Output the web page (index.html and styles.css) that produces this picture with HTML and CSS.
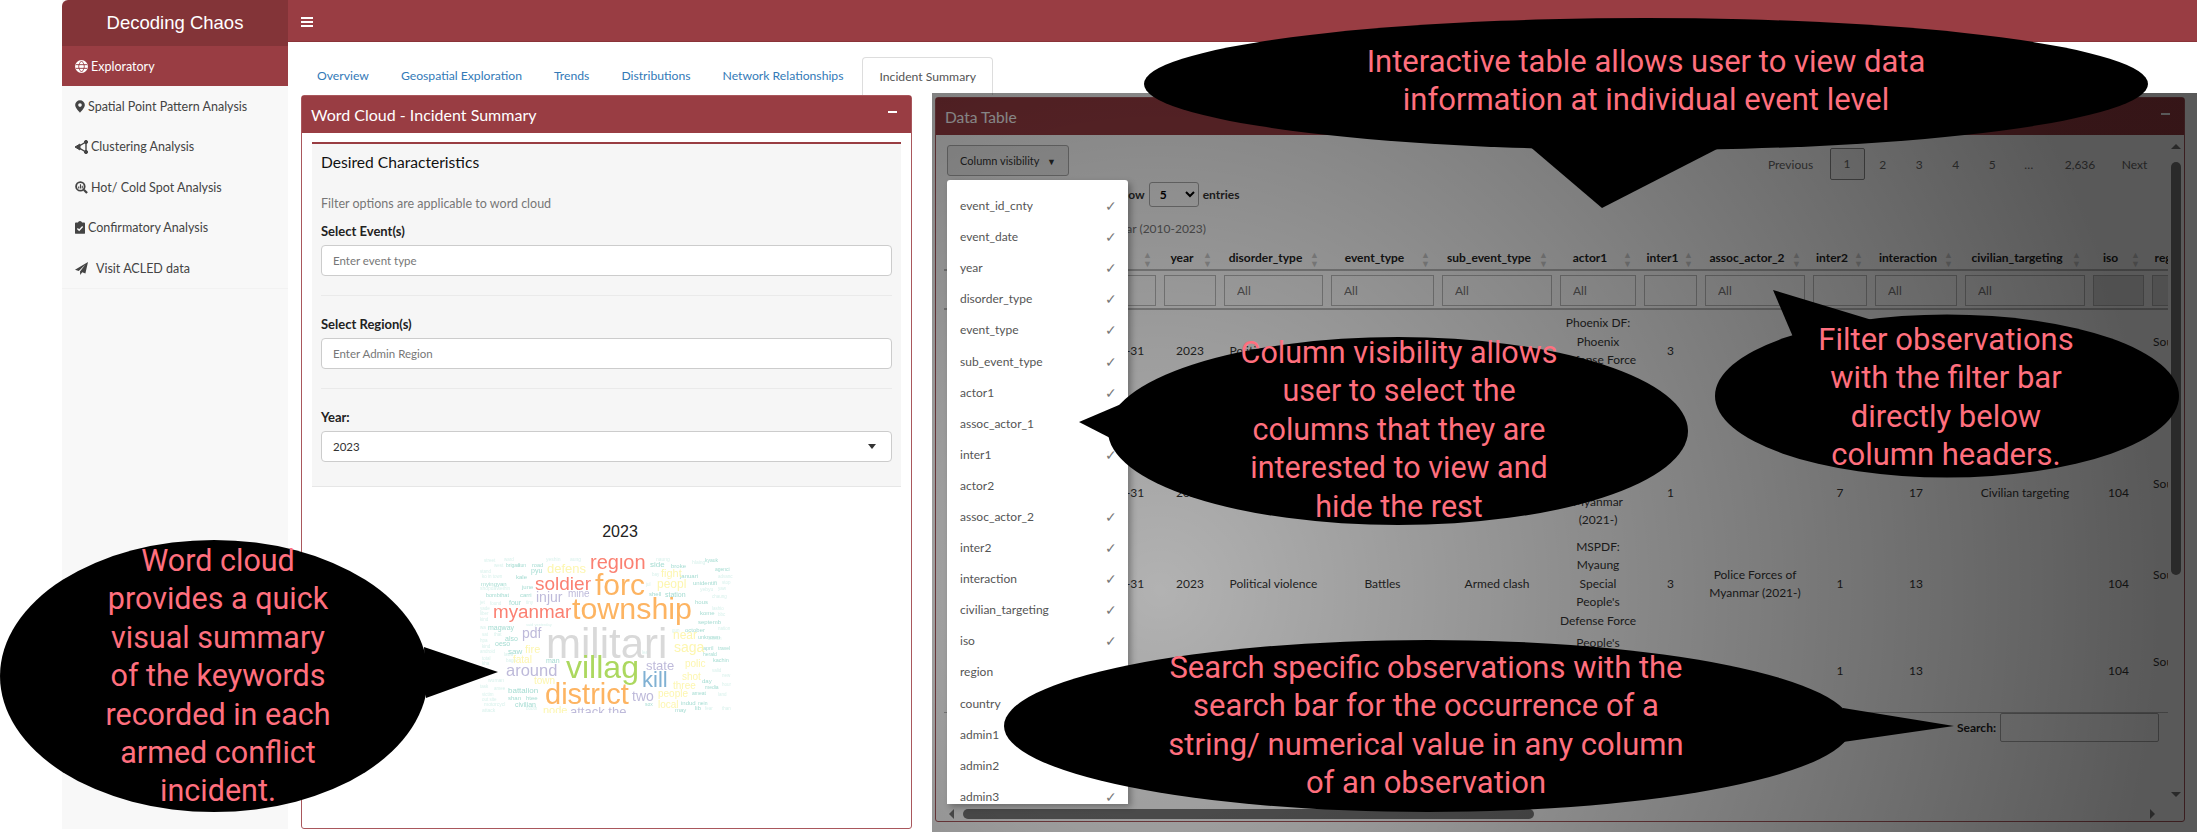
FILE: index.html
```html
<!DOCTYPE html>
<html lang="en">
<head>
  <meta charset="UTF-8">
  <title>Decoding Chaos</title>
  <link rel="stylesheet" href="styles.css">
</head>
<body>

  <div class="page">

    <!-- Sidebar -->
    <div class="sidebar">
      <div class="brand">Decoding Chaos</div>
      <div class="nav-item active">
        <svg class="icon" width="13" height="13" viewBox="0 0 14 14" fill="none" stroke="#fff" stroke-width="1.4"><circle cx="7" cy="7" r="6.2" fill="#fff"/><path d="M1 5h12M1 9h12M7 1c-4 4-4 8 0 12M7 1c4 4 4 8 0 12" stroke="#993d43" stroke-width="1"/></svg>
        <span>Exploratory</span>
      </div>
      <div class="nav-item">
        <svg class="icon" width="10" height="13" viewBox="0 0 12 15"><path fill="#444" fill-rule="evenodd" d="M6 0a5.8 5.8 0 0 0-5.8 5.8C.2 9.2 6 15 6 15s5.8-5.8 5.8-9.2A5.8 5.8 0 0 0 6 0zm0 3.6a2.2 2.2 0 1 1 0 4.4 2.2 2.2 0 0 1 0-4.4z"/></svg>
        <span>Spatial Point Pattern Analysis</span>
      </div>
      <div class="nav-item">
        <svg class="icon" width="13" height="14" viewBox="0 0 13 14" fill="#444" stroke="#444"><path d="M2.5 7L11 2v10z" fill="none" stroke-width="1.4"/><path d="M0 7l5-3v6z"/><circle cx="11" cy="2" r="1.6"/><circle cx="11" cy="12" r="1.6"/></svg>
        <span>Clustering Analysis</span>
      </div>
      <div class="nav-item">
        <svg class="icon" width="13" height="13" viewBox="0 0 14 14" fill="none" stroke="#444"><circle cx="5.8" cy="5.8" r="4.6" stroke-width="2"/><path d="M9.5 9.5L13 13" stroke-width="2.4"/><path d="M4 8V6M5.9 8V3.6M7.8 8V5" stroke-width="1.2"/></svg>
        <span>Hot/ Cold Spot Analysis</span>
      </div>
      <div class="nav-item">
        <svg class="icon" width="10" height="13" viewBox="0 0 11 14"><path fill="#444" d="M1 1.6h2.2a2.4 2.4 0 0 1 4.6 0H10a1 1 0 0 1 1 1V13a1 1 0 0 1-1 1H1a1 1 0 0 1-1-1V2.6a1 1 0 0 1 1-1z"/><path fill="none" stroke="#f8f8f8" stroke-width="1.5" d="M2.6 8l2 2 3.8-4"/></svg>
        <span>Confirmatory Analysis</span>
      </div>
      <div class="nav-item nav-last">
        <svg class="icon" width="13" height="13" viewBox="0 0 14 14"><path fill="#444" d="M14 0L0 8.4l4 1.3L11 3 5.4 10.2 5.6 14l2.2-3 3.4 1.4z"/></svg>
        <span>Visit ACLED data</span>
      </div>
    </div>

    <div class="main">
      <!-- Barra de cima -->
      <div class="topbar"><span class="burger"></span></div>

      <div class="tabs">
        <a class="tab">Overview</a>
        <a class="tab">Geospatial Exploration</a>
        <a class="tab">Trends</a>
        <a class="tab">Distributions</a>
        <a class="tab">Network Relationships</a>
        <a class="tab tab-active">Incident Summary</a>
      </div>

      <div class="panels">

        <!-- Word cloud -->
        <div class="box box-cloud">
          <div class="box-header">
            <span class="cloud-title">Word Cloud - Incident Summary</span>
            <span class="collapse"></span>
          </div>
          <div class="well">
            <h4>Desired Characteristics</h4>
            <p class="help">Filter options are applicable to word cloud</p>
            <label>Select Event(s)</label>
            <input class="field" type="text" placeholder="Enter event type">
            <hr>
            <label>Select Region(s)</label>
            <input class="field" type="text" placeholder="Enter Admin Region">
            <hr>
            <label>Year:</label>
            <div class="field field-select">2023<span class="caret"></span></div>
          </div>

          <div class="plot-title">2023</div>
          <svg class="cloud" width="258" height="156" viewBox="18 17 258 156">
            <g class="w-tiny">
              <text x="24" y="22" font-size="4.5">street</text><text x="34" y="27" font-size="4.5">west</text><text x="20" y="33" font-size="4.5">stand</text><text x="22" y="38" font-size="4.5">ko in town</text><text x="44" y="21" font-size="4.5">ward</text><text x="86" y="21" font-size="5">yeshin</text><text x="110" y="21" font-size="5">aung</text><text x="196" y="21" font-size="5">naung</text><text x="232" y="24" font-size="5">hlaing</text><text x="258" y="38" font-size="4.5">advanc</text><text x="262" y="44" font-size="4.5">stop</text><text x="258" y="50" font-size="4.5">yaw</text><text x="240" y="51" font-size="5">yebyu</text><text x="20" y="50" font-size="5">shopdawei</text><text x="44" y="50" font-size="4.5">hin</text><text x="20" y="64" font-size="4.5">jet</text><text x="30" y="65" font-size="4.5">found</text><text x="66" y="64" font-size="4.5">tiny</text><text x="20" y="70" font-size="4.5">yade</text><text x="20" y="75" font-size="4.5">liber</text><text x="20" y="81" font-size="4.5">kind</text><text x="20" y="89" font-size="4.5">wa</text><text x="66" y="86" font-size="4">said yesterday</text><text x="252" y="58" font-size="4.5">chaung</text><text x="252" y="70" font-size="4.5">lashio</text><text x="258" y="76" font-size="4.5">bbc</text><text x="258" y="90" font-size="4.5">nation</text><text x="248" y="100" font-size="4.5">ditmon</text><text x="22" y="96" font-size="4.5">sat</text><text x="34" y="96" font-size="4.5">that</text><text x="20" y="102" font-size="4.5">hpa</text><text x="22" y="108" font-size="4.5">kind</text><text x="20" y="113" font-size="4.5">android</text><text x="44" y="116" font-size="4.5">lawa</text><text x="22" y="120" font-size="4.5">total</text><text x="22" y="125" font-size="4.5">kha</text><text x="46" y="122" font-size="4.5">bago</text><text x="20" y="132" font-size="4.5">mil</text><text x="28" y="142" font-size="5">wuman</text><text x="20" y="148" font-size="4.5">task</text><text x="34" y="150" font-size="4.5">amee</text><text x="22" y="156" font-size="4.5">victim</text><text x="22" y="161" font-size="4.5">out site</text><text x="24" y="166" font-size="5">motorcycl</text><text x="22" y="172" font-size="5">attack</text><text x="66" y="170" font-size="4.5">booth</text><text x="252" y="132" font-size="4.5">valid</text><text x="262" y="137" font-size="4.5">new</text><text x="262" y="146" font-size="4.5">hour</text><text x="258" y="156" font-size="4.5">land</text><text x="262" y="170" font-size="4.5">than</text><text x="245" y="170" font-size="4.5">fear</text><text x="182" y="114" font-size="4.5">leat</text><text x="212" y="92" font-size="4.5">gun</text><text x="186" y="46" font-size="4.5">jul</text><text x="192" y="36" font-size="4.5">bay</text>
            </g>
            <g class="w-teal">
              <text x="190" y="27" font-size="8">side</text><text x="205" y="57" font-size="7">station</text><text x="189" y="56" font-size="6">shell</text><text x="48" y="153" font-size="8">battalion</text><text x="55" y="167" font-size="7">civilian</text><text x="48" y="114" font-size="8">saw</text><text x="45" y="101" font-size="7">also</text><text x="35" y="106" font-size="7">oeso</text><text x="28" y="90" font-size="7">magway</text><text x="62" y="49" font-size="6">june</text><text x="49" y="65" font-size="7">four</text><text x="21" y="46" font-size="6">myingyan</text><text x="71" y="33" font-size="7">pyu</text><text x="56" y="39" font-size="6">kale</text><text x="26" y="57" font-size="5.5">bombthat</text><text x="60" y="57" font-size="6">carri</text><text x="48" y="160" font-size="6">shan</text><text x="66" y="160" font-size="6">htee</text><text x="86" y="123" font-size="7">man</text><text x="225" y="92" font-size="6">october</text><text x="238" y="99" font-size="5.5">unknown</text><text x="253" y="122" font-size="5.5">kachin</text><text x="235" y="64" font-size="6">hous</text><text x="233" y="45" font-size="6">unidentifi</text><text x="220" y="38" font-size="6">januari</text><text x="240" y="75" font-size="6">kome</text><text x="238" y="84" font-size="6">septemb</text><text x="243" y="110" font-size="5.5">april</text><text x="258" y="110" font-size="5">travel</text><text x="243" y="116" font-size="5">herald</text><text x="242" y="143" font-size="6">day</text><text x="245" y="149" font-size="5">media</text><text x="232" y="155" font-size="5">ameat</text><text x="221" y="165" font-size="6">indud</text><text x="215" y="172" font-size="6">may</text><text x="235" y="170" font-size="6">lib</text><text x="185" y="166" font-size="5">sox</text><text x="211" y="28" font-size="6">broke</text><text x="255" y="31" font-size="5">agenci</text><text x="245" y="22" font-size="5">kyauk</text><text x="72" y="27" font-size="5.5">road</text><text x="46" y="27" font-size="5">brigad</text><text x="58" y="27" font-size="5">kun</text><text x="238" y="165" font-size="5">nein</text>
            </g>
            <g class="w-yellow">
              <text x="87" y="33" font-size="13">defens</text><text x="197" y="48" font-size="12">peopl</text><text x="201" y="37" font-size="11">fight</text><text x="213" y="99" font-size="12">near</text><text x="214" y="112" font-size="14">saga</text><text x="65" y="113" font-size="11">fire</text><text x="53" y="123" font-size="10">fatal</text><text x="74" y="144" font-size="10">town</text><text x="222" y="140" font-size="10">shot</text><text x="213" y="149" font-size="10">three</text><text x="198" y="157" font-size="10">people</text><text x="225" y="127" font-size="10">polic</text><text x="198" y="168" font-size="10">local</text><text x="83" y="174" font-size="11">node</text>
            </g>
            <g class="w-lav">
              <text x="46" y="136" font-size="16.5">around</text><text x="186" y="130" font-size="13">state</text><text x="172" y="161" font-size="14">two</text><text x="62" y="98" font-size="14">pdf</text><text x="76" y="62" font-size="14">injur</text><text x="108" y="57" font-size="10">mine</text><text x="110" y="176" font-size="13">attack the</text>
            </g>
            <text class="w-grey" x="86" y="118" font-size="42">militari</text>
            <text class="w-orange" x="112" y="79" font-size="30.4">township</text>
            <text class="w-orange" x="135" y="55" font-size="30">forc</text>
            <text class="w-orange" x="85" y="164" font-size="29">district</text>
            <text class="w-red" x="33" y="78" font-size="18.8">myanmar</text>
            <text class="w-red" x="75" y="50" font-size="19">soldier</text>
            <text class="w-red" x="130" y="29" font-size="20">region</text>
            <text class="w-green" x="106" y="138" font-size="32">villag</text>
            <text class="w-blue" x="182" y="147" font-size="22">kill</text>
          </svg>
        </div>

        <!-- Tabela de dados -->
        <div class="box box-data">
          <div class="box-header">
            <span>Data Table</span>
            <span class="collapse"></span>
          </div>
          <div class="dt-body">
            <div class="dt-top">
              <button class="btn-colvis">Column visibility <span class="btn-caret">▼</span></button>
              <div class="pager">
                <span class="page-link page-prev">Previous</span>
                <span class="page-link page-current">1</span>
                <span class="page-link">2</span>
                <span class="page-link">3</span>
                <span class="page-link">4</span>
                <span class="page-link">5</span>
                <span class="page-link">…</span>
                <span class="page-link page-last">2,636</span>
                <span class="page-link page-next">Next</span>
              </div>
            </div>
            <div class="dt-length">Show <select><option>5</option></select> entries</div>
            <div class="dt-caption">Incidents by year (2010-2023)</div>

            <div class="dt-scroll">
              <table class="dt-table">
                <colgroup>
                  <col class="c-id"><col class="c-date"><col class="c-year"><col class="c-disorder"><col class="c-event"><col class="c-sub"><col class="c-actor"><col class="c-inter1"><col class="c-assoc"><col class="c-inter2"><col class="c-interaction"><col class="c-civ"><col class="c-iso"><col class="c-region">
                </colgroup>
                <thead>
                  <tr class="head-row">
                    <th>event_id_cnty</th><th>event_date</th><th>year</th><th>disorder_type</th><th>event_type</th><th>sub_event_type</th><th>actor1</th><th>inter1</th><th>assoc_actor_2</th><th>inter2</th><th>interaction</th><th>civilian_targeting</th><th>iso</th><th>region</th>
                  </tr>
                  <tr class="filter-row">
                    <td><input placeholder="All"></td><td><input></td><td><input></td><td><input placeholder="All"></td><td><input placeholder="All"></td><td><input placeholder="All"></td><td><input placeholder="All"></td><td><input></td><td><input placeholder="All"></td><td><input></td><td><input placeholder="All"></td><td><input placeholder="All"></td><td><input class="input-off"></td><td><input class="input-off"></td>
                  </tr>
                </thead>
                <tbody>
                  <tr class="row-1">
                    <td>MMR50001</td><td>2023-12-31</td><td>2023</td><td>Political violence</td><td>Battles</td><td>Armed clash</td><td>Phoenix DF:<br>Phoenix<br>Defense Force<br>Myanmar</td><td>3</td><td></td><td>1</td><td>13</td><td></td><td>104</td><td>Southeast<br>Asia</td>
                  </tr>
                  <tr class="row-2">
                    <td>MMR50002</td><td>2023-12-31</td><td>2023</td><td>Political violence</td><td>Violence against<br>civilians</td><td>Attack</td><td>Military<br>Forces of<br>Myanmar<br>(2021-)</td><td>1</td><td></td><td>7</td><td>17</td><td>Civilian targeting</td><td>104</td><td>Southeast<br>Asia</td>
                  </tr>
                  <tr class="row-3">
                    <td>MMR50003</td><td>2023-12-31</td><td>2023</td><td>Political violence</td><td>Battles</td><td>Armed clash</td><td>MSPDF:<br>Myaung<br>Special<br>People's<br>Defense Force</td><td>3</td><td>Police Forces of<br>Myanmar (2021-)</td><td>1</td><td>13</td><td></td><td>104</td><td>Southeast<br>Asia</td>
                  </tr>
                  <tr class="row-4">
                    <td>MMR50004</td><td>2023-12-31</td><td>2023</td><td>Political violence</td><td>Battles</td><td>Armed clash</td><td>People's<br>Defense<br>Force<br>Myanmar</td><td>3</td><td></td><td>1</td><td>13</td><td></td><td>104</td><td>Southeast<br>Asia</td>
                  </tr>
                </tbody>
              </table>
            </div>

            <div class="dt-search">
              <label>Search:</label>
              <input type="text">
            </div>

            <!-- Barras de rolagem -->
            <div class="scroll-v">
              <span class="arrow arrow-up"></span>
              <span class="thumb-v"></span>
              <span class="arrow arrow-down"></span>
            </div>
            <div class="scroll-h">
              <span class="arrow arrow-left"></span>
              <span class="thumb-h"></span>
              <span class="arrow arrow-right"></span>
            </div>
          </div>
        </div>

      </div>
    </div>
  </div>

  <!-- Fundo escuro do menu de colunas -->
  <div class="dt-backdrop"></div>

  <div class="colvis-menu">
    <div class="colvis-item"><span>event_id_cnty</span><span class="tick">✓</span></div>
    <div class="colvis-item"><span>event_date</span><span class="tick">✓</span></div>
    <div class="colvis-item"><span>year</span><span class="tick">✓</span></div>
    <div class="colvis-item"><span>disorder_type</span><span class="tick">✓</span></div>
    <div class="colvis-item"><span>event_type</span><span class="tick">✓</span></div>
    <div class="colvis-item"><span>sub_event_type</span><span class="tick">✓</span></div>
    <div class="colvis-item"><span>actor1</span><span class="tick">✓</span></div>
    <div class="colvis-item"><span>assoc_actor_1</span></div>
    <div class="colvis-item"><span>inter1</span><span class="tick">✓</span></div>
    <div class="colvis-item"><span>actor2</span></div>
    <div class="colvis-item"><span>assoc_actor_2</span><span class="tick">✓</span></div>
    <div class="colvis-item"><span>inter2</span><span class="tick">✓</span></div>
    <div class="colvis-item"><span>interaction</span><span class="tick">✓</span></div>
    <div class="colvis-item"><span>civilian_targeting</span><span class="tick">✓</span></div>
    <div class="colvis-item"><span>iso</span><span class="tick">✓</span></div>
    <div class="colvis-item"><span>region</span></div>
    <div class="colvis-item"><span>country</span></div>
    <div class="colvis-item"><span>admin1</span></div>
    <div class="colvis-item"><span>admin2</span></div>
    <div class="colvis-item"><span>admin3</span><span class="tick">✓</span></div>
  </div>

  <!-- Balões de anotação -->
  <svg class="callouts" width="2197" height="832" viewBox="0 0 2197 832">
    <ellipse cx="1646" cy="84" rx="502" ry="66"/>
    <path d="M1528 145L1602 208L1721 147z"/>
    <ellipse cx="1398" cy="431" rx="290" ry="94"/>
    <path d="M1126 402L1079 422L1118 442z"/>
    <ellipse cx="1947" cy="396" rx="232" ry="81.5"/>
    <path d="M1793 337L1773 290L1872 320z"/>
    <ellipse cx="1428" cy="726" rx="424" ry="86"/>
    <path d="M1843 708L1954 726L1843 742z"/>
    <ellipse cx="214" cy="676" rx="214" ry="136"/>
    <path d="M424 647L498 672L426 698z"/>
  </svg>

  <div class="note note-table">Interactive table allows user to view data<br>information at individual event level</div>
  <div class="note note-colvis">Column visibility allows<br>user to select the<br>columns that they are<br>interested to view and<br>hide the rest</div>
  <div class="note note-filter">Filter observations<br>with the filter bar<br>directly below<br>column headers.</div>
  <div class="note note-search">Search specific observations with the<br>search bar for the occurrence of a<br>string/ numerical value in any column<br>of an observation</div>
  <div class="note note-cloud">Word cloud<br>provides a quick<br>visual summary<br>of the keywords<br>recorded in each<br>armed conflict<br>incident.</div>

</body>
</html>
```

FILE: styles.css
```css
html, body {
  margin: 0;
  padding: 0;
}

body {
  width: 2197px;
  height: 832px;
  overflow: hidden;
  position: relative;
  background-color: #fff;
  font-family: "Lato", "Open Sans", sans-serif;
  font-size: 12px;
  color: #333;
}

.page {
  display: flex;
  height: 829px;
  padding-left: 62px;
}

/* Sidebar */
.sidebar {
  width: 226px;
  flex-shrink: 0;
  background-color: #f8f8f8;
}

.brand {
  height: 46px;
  line-height: 46px;
  text-align: center;
  background-color: #833438;
  border-top-left-radius: 6px;
  color: #fff;
  font-family: "Liberation Sans", sans-serif;
  font-size: 18.5px;
}

.nav-item {
  display: flex;
  align-items: center;
  gap: 3px;
  height: 40.4px;
  padding-left: 13px;
  font-size: 12.5px;
  color: #444;
}

.nav-item.active {
  background-color: #993d43;
  color: #fff;
}

.nav-last {
  border-bottom: 1px solid #f2f2f2;
}

.nav-last .icon {
  margin-right: 5px;
}

/* Topo */
.main {
  flex: 1;
  min-width: 0;
}

.topbar {
  height: 41px;
  background-color: #993d43;
  border-bottom: 1px solid #8a3439;
  display: flex;
  align-items: center;
  padding-left: 13px;
}

.burger {
  width: 12px;
  height: 2px;
  margin-bottom: 6px;
  background-color: #fff;
  box-shadow: 0 4px 0 #fff, 0 8px 0 #fff;
}

/* Abas */
.tabs {
  display: flex;
  height: 38px;
  margin-top: 15px;
  padding-left: 13px;
}

.tab {
  padding: 0 16px;
  line-height: 38px;
  font-size: 12.2px;
  color: #337ab7;
}

.tab-active {
  margin-left: 3px;
  color: #555;
  background-color: #fff;
  border: 1px solid #ddd;
  border-bottom: none;
  border-radius: 4px 4px 0 0;
  line-height: 37px;
}

/* Caixas */
.panels {
  display: flex;
  gap: 23px;
  padding-left: 13px;
}

.box {
  box-sizing: border-box;
  border: 1px solid #a9575c;
  border-radius: 3px;
  background-color: #fff;
}

.box-cloud {
  width: 611px;
  height: 734px;
}

.box-data {
  width: 1250px;
  height: 725px;
  margin-top: 2px;
  position: relative;
}

.box-header {
  height: 37px;
  padding: 0 9px;
  display: flex;
  align-items: center;
  justify-content: space-between;
  background-color: #993d43;
  color: #fff;
  font-size: 15.5px;
}

.cloud-title {
  font-size: 16px;
}

.collapse {
  width: 9px;
  height: 2px;
  margin: 0 5px 6px 0;
  background-color: #fff;
}

/* Filtros */
.well {
  box-sizing: border-box;
  height: 345px;
  margin: 9px 10px 0;
  padding: 8px 9px 0;
  background-color: #f6f6f6;
  border-top: 2px solid #993d43;
  border-bottom: 1px solid #e6e6e6;
}

.well h4 {
  margin: 0;
  font-size: 15.6px;
  font-weight: 400;
  line-height: 20px;
  color: #111;
}

.help {
  margin: 24px 0 0;
  line-height: 16px;
  font-size: 12.5px;
  color: #777;
}

.well label {
  display: block;
  margin-top: 11px;
  line-height: 16px;
  font-size: 13px;
  font-weight: 700;
  color: #222;
}

.field {
  display: block;
  box-sizing: border-box;
  width: 100%;
  height: 31px;
  margin-top: 6px;
  padding: 0 11px;
  background-color: #fff;
  border: 1px solid #ccc;
  border-radius: 4px;
  font-family: inherit;
  font-size: 11.5px;
  color: #333;
}

.field::placeholder {
  color: #777;
}

.well hr {
  height: 1px;
  margin: 19px 0 0;
  border: none;
  background-color: #eaeaea;
}

.well hr + label {
  margin-top: 20px;
}

.field-select {
  display: flex;
  align-items: center;
  justify-content: space-between;
  padding-right: 15px;
}

.caret {
  border-left: 4px solid transparent;
  border-right: 4px solid transparent;
  border-top: 5px solid #333;
}

/* Nuvem de palavras */
.plot-title {
  margin: 36px 0 0 27px;
  text-align: center;
  font-family: "Liberation Sans", sans-serif;
  font-size: 16px;
  line-height: 18px;
  color: #222;
}

.cloud {
  display: block;
  margin: 16px 0 0 176px;
  font-family: "Liberation Sans", sans-serif;
  filter: blur(0.3px);
}

.w-tiny { fill: #d8f1ec; }
.w-teal { fill: #a5dcd2; }
.w-yellow { fill: #fdf6b0; }
.w-lav { fill: #bebada; }
.w-grey { fill: #d9d9d9; }
.w-orange { fill: #fdb462; }
.w-red { fill: #fb8072; }
.w-green { fill: #acd85f; }
.w-blue { fill: #80b1d3; }

/* Tabela */
.dt-body {
  position: relative;
  height: 687px;
  padding: 10px 0 0 8px;
  box-sizing: border-box;
}

.dt-top {
  display: flex;
  justify-content: space-between;
  height: 35px;
  padding-right: 28px;
}

.btn-colvis {
  width: 122px;
  height: 31px;
  margin-left: 3px;
  padding: 0;
  background-color: #eee;
  border: 1px solid #aaa;
  border-radius: 3px;
  font-family: inherit;
  font-size: 11px;
  color: #333;
}

.btn-caret {
  margin-left: 5px;
  font-size: 9px;
}

.pager {
  display: flex;
  align-items: center;
  height: 32px;
  margin-top: 3px;
  font-size: 12px;
  color: #666;
}

.page-link {
  width: 36.5px;
  text-align: center;
}

.page-prev {
  width: 62px;
  padding-right: 8px;
}

.page-current {
  box-sizing: border-box;
  width: 35px;
  height: 32px;
  line-height: 30px;
  background-color: #f4f4f4;
  border: 1px solid #888;
  border-radius: 2px;
}

.page-last {
  width: 66px;
}

.page-next {
  width: 43px;
}

.dt-length {
  height: 25px;
  margin-top: 2px;
  padding-left: 171px;
  display: flex;
  align-items: center;
  gap: 4px;
  font-size: 12px;
  font-weight: 700;
  color: #333;
}

.dt-length select {
  width: 50px;
  height: 25px;
  border: 1px solid #aaa;
  border-radius: 3px;
  background-color: #fff;
  font-family: inherit;
  font-size: 12px;
  font-weight: 700;
  padding-left: 6px;
}

.dt-caption {
  width: 262px;
  margin-top: 14px;
  text-align: right;
  line-height: 16px;
  font-size: 12px;
  color: #777;
}

.dt-scroll {
  width: 1224px;
  margin-top: 10px;
  overflow: hidden;
}

.dt-table {
  width: 1267px;
  table-layout: fixed;
  border-collapse: separate;
  border-spacing: 0;
  text-align: center;
  font-size: 12px;
  line-height: 18.4px;
}

.c-id { width: 100px; }
.c-date { width: 116px; }
.c-year { width: 60px; }
.c-disorder { width: 107px; }
.c-event { width: 111px; }
.c-sub { width: 118px; }
.c-actor { width: 84px; }
.c-inter1 { width: 61px; }
.c-assoc { width: 108px; }
.c-inter2 { width: 62px; }
.c-interaction { width: 90px; }
.c-civ { width: 128px; }
.c-iso { width: 59px; }
.c-region { width: 63px; }

.dt-table th {
  position: relative;
  height: 22px;
  padding: 0 20px 0 4px;
  border-bottom: 2px solid #bbb;
  font-weight: 700;
  white-space: nowrap;
  color: #222;
}

/* setinhas de ordenação */
.dt-table th::before,
.dt-table th::after {
  position: absolute;
  right: 8px;
  font-size: 9px;
  line-height: 9px;
  color: #ccc;
}

.dt-table th::before {
  content: "▲";
  top: 3px;
}

.dt-table th::after {
  content: "▼";
  top: 12px;
}

.filter-row td {
  height: 37px;
  padding: 0 4px;
  border-bottom: 2px solid #bbb;
}

.filter-row input {
  display: block;
  box-sizing: border-box;
  width: 100%;
  height: 31px;
  margin-top: 2px;
  padding: 0 12px;
  background-color: #fff;
  border: 1px solid #bbb;
  font-family: inherit;
  font-size: 12px;
}

.filter-row input.input-off {
  background-color: #e4e4e4;
}

.dt-table tbody td {
  box-sizing: border-box;
  padding: 0 4px;
  vertical-align: middle;
  white-space: nowrap;
  color: #333;
}

.dt-table tbody td:nth-child(2) {
  padding-left: 24px;
}

.dt-table tbody .row-1 td {
  height: 138px;
  padding-bottom: 56px;
}

.row-2 td {
  height: 90px;
}

.row-3 td {
  height: 92px;
}

.row-4 td {
  height: 83px;
  border-bottom: 1px solid #bbb;
}

.dt-search {
  display: flex;
  justify-content: flex-end;
  align-items: center;
  gap: 4px;
  width: 1215px;
  font-size: 12px;
  font-weight: 700;
  color: #222;
}

.dt-search input {
  box-sizing: border-box;
  width: 159px;
  height: 29px;
  background-color: #fff;
  border: 1px solid #aaa;
  border-radius: 2px;
}

/* Barras de rolagem */
.scroll-v {
  position: absolute;
  top: 0;
  right: 3px;
  bottom: 10px;
  width: 10px;
}

.thumb-v {
  position: absolute;
  top: 27px;
  width: 10px;
  height: 413px;
  border-radius: 5px;
  background-color: #777;
}

.scroll-h {
  position: absolute;
  left: 13px;
  right: 29px;
  bottom: 3px;
  height: 10px;
}

.thumb-h {
  position: absolute;
  left: 14px;
  width: 571px;
  height: 10px;
  border-radius: 5px;
  background-color: #777;
}

.arrow {
  position: absolute;
  width: 0;
  height: 0;
  border: 5px solid transparent;
}

.arrow-up {
  top: 9px;
  border-top: none;
  border-bottom-color: #777;
}

.arrow-down {
  bottom: 15px;
  border-bottom: none;
  border-top-color: #777;
}

.arrow-left {
  left: 0;
  border-left: none;
  border-right-color: #777;
}

.arrow-right {
  right: 0;
  border-right: none;
  border-left-color: #777;
}

/* Fundo e menu de colunas */
.dt-backdrop {
  position: absolute;
  left: 932px;
  top: 93px;
  right: 0;
  bottom: 0;
  background: radial-gradient(circle at 228px 497px, rgba(0, 0, 0, 0.3) 0, rgba(0, 0, 0, 0.65) 1000px);
}

.colvis-menu {
  position: absolute;
  left: 947px;
  top: 180px;
  box-sizing: border-box;
  width: 181px;
  height: 624px;
  padding: 10px 11px 0 13px;
  overflow: hidden;
  background-color: #fff;
  border-radius: 3px 3px 0 0;
  box-shadow: 3px 3px 6px rgba(0, 0, 0, 0.3);
}

.colvis-item {
  display: flex;
  justify-content: space-between;
  align-items: center;
  height: 31.1px;
  font-size: 12px;
  color: #555;
}

.tick {
  color: #777;
  font-size: 14px;
}

/* Anotações */
.callouts {
  position: absolute;
  left: 0;
  top: 0;
  fill: #000;
}

.note {
  position: absolute;
  text-align: center;
  white-space: nowrap;
  font-family: "Roboto", sans-serif;
  font-size: 31px;
  line-height: 38.4px;
  color: #ff6f7e;
}

.note-table { left: 1296px; width: 700px; top: 43px; }
.note-colvis { left: 1099px; width: 600px; top: 334px; font-size: 30.5px; }
.note-filter { left: 1746px; width: 400px; top: 321px; }
.note-search { left: 1076px; width: 700px; top: 649px; }
.note-cloud { left: 18px; width: 400px; top: 542px; font-size: 30.5px; }
```
